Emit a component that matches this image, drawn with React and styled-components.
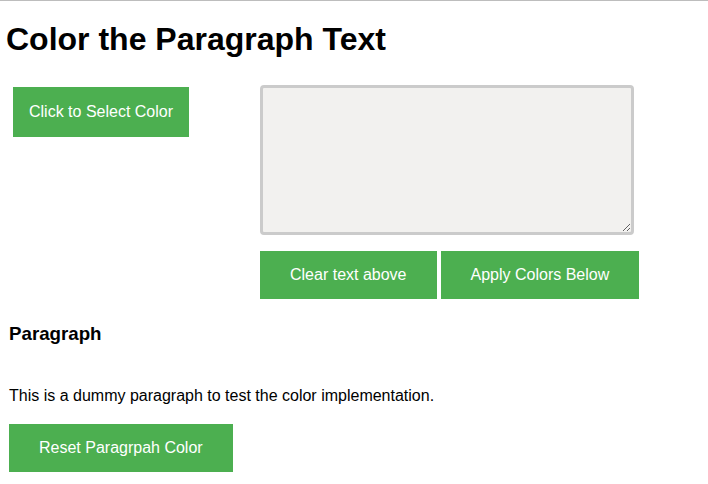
import styled, { createGlobalStyle } from "styled-components";

const GlobalStyle = createGlobalStyle`
    body {
        margin: 0;
        border-top: 1px solid #bdbdbd;
        font-family: "Liberation Sans", Arial, sans-serif;
        background: #fff;
        color: #000;
    }
`

const Page = styled.div`
    padding: 0;
`

const Title = styled.h1`
    margin: 20px 0 0 6px;
    font-size: 32px;
    font-weight: bold;
    line-height: 37px;
`

const Editor = styled.div`
    display: grid;
    grid-template-columns: 260px auto;
    margin-top: 27px;
`

const PickerCell = styled.div`
    padding: 2px 0 0 13px;
`

const Button = styled.button`
    display: inline-block;
    height: ${props => props.$tall ? 50 : 48}px;
    padding: 0 ${props => props.$pad || 30}px;
    border: none;
    background: #4caf50;
    color: #fff;
    font-family: "Liberation Sans", Arial, sans-serif;
    font-size: 16px;
    cursor: pointer;
`

const TextArea = styled.textarea`
    display: block;
    box-sizing: border-box;
    width: 374px;
    height: 150px;
    border: 3px solid #cbcbcb;
    border-radius: 4px;
    background: #f2f1ef;
    font-family: "Liberation Sans", Arial, sans-serif;
    font-size: 16px;
    resize: both;
    outline: none;
`

const ButtonRow = styled.div`
    display: flex;
    gap: 4px;
    margin-top: 16px;
`

const Section = styled.section`
    padding-left: 9px;
    margin-top: 24px;
`

const SubTitle = styled.h3`
    margin: 0;
    font-size: 18.72px;
    line-height: 21px;
    font-weight: bold;
`

const Text = styled.p`
    margin: 43px 0 0 0;
    font-size: 16px;
    line-height: 18px;
`

const ResetRow = styled.div`
    margin-top: 19px;
`

export default function App() {
    return (
        <Page>
            <GlobalStyle />
            <Title>Color the Paragraph Text</Title>
            <Editor>
                <PickerCell>
                    <Button $tall $pad={16}>Click to Select Color</Button>
                </PickerCell>
                <div>
                    <TextArea />
                    <ButtonRow>
                        <Button $pad={30}>Clear text above</Button>
                        <Button $pad={30}>Apply Colors Below</Button>
                    </ButtonRow>
                </div>
            </Editor>
            <Section>
                <SubTitle>Paragraph</SubTitle>
                <Text>This is a dummy paragraph to test the color implementation.</Text>
                <ResetRow>
                    <Button $pad={30}>Reset Paragrpah Color</Button>
                </ResetRow>
            </Section>
        </Page>
    );
}
